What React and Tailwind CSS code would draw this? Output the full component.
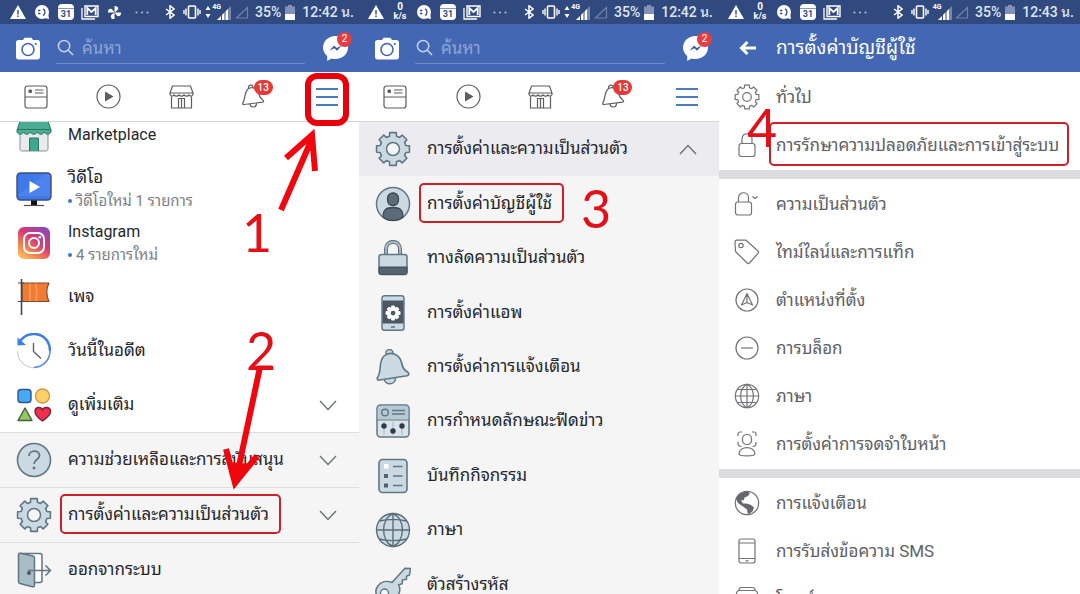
import React from "react";

/* ---------- status bar ---------- */

const Slot = ({ w = "w-6", children }) => (
  <span className={`flex shrink-0 items-center justify-center ${w}`}>{children}</span>
);

const WarnIcon = () => (
  <svg width="16" height="14" viewBox="0 0 16 14" aria-hidden="true">
    <path d="M8 0L16 14H0Z" fill="#fff" />
    <path d="M8 5v4.500M8 10.500v1.600" stroke="#324a80" strokeWidth="1.400" />
  </svg>
);
const ChatIcon = () => (
  <svg width="16" height="16" viewBox="0 0 16 16" aria-hidden="true">
    <circle cx="8" cy="8" r="7" fill="#fff" />
    <path d="M10 14l5 1-1-6z" fill="#fff" />
    <path d="M4 6.500h2.400M4 9.500h2.400M9 4.800c2.600 1.300 2.600 5.400 0 6.700" stroke="#324a80" strokeWidth="1.300" fill="none" />
  </svg>
);
const CalendarIcon = () => (
  <span className="relative flex h-4 w-4 items-end justify-center rounded-sm bg-white">
    <span className="absolute inset-x-0 top-1 h-px bg-[#8a97b8]" />
    <span className="text-[9px] font-bold leading-[11px] text-[#324a80]">31</span>
  </span>
);
const MailIcon = () => (
  <svg width="18" height="15" viewBox="0 0 18 15" fill="none" stroke="#fff" aria-hidden="true">
    <path d="M1 3v11h13" strokeWidth="1.300" />
    <path d="M4 1h13v10.500H4z" strokeWidth="1.400" />
    <path d="M6.300 10V3l4.200 4 4.200-4v7" strokeWidth="1.800" />
  </svg>
);
const PinwheelIcon = () => (
  <svg width="15" height="15" viewBox="0 0 16 16" fill="#fff" aria-hidden="true">
    {[0, 90, 180, 270].map((a) => (
      <path key={a} d="M8 8V1c3 0 4 1.200 4 2.800C12 5.500 10.500 6 8 8z" transform={`rotate(${a} 8 8)`} />
    ))}
  </svg>
);
const SpeedIcon = () => (
  <span className="flex flex-col items-center text-white">
    <span className="text-[10px] font-bold leading-[8px]">0</span>
    <span className="text-[9px] font-bold leading-[10px]">k/s</span>
  </span>
);
const DotsIcon = () => (
  <svg width="14" height="3" viewBox="0 0 14 3" fill="#aeb8d0" aria-hidden="true">
    <circle cx="1.500" cy="1.500" r="1.100" /><circle cx="7" cy="1.500" r="1.100" /><circle cx="12.500" cy="1.500" r="1.100" />
  </svg>
);
const BluetoothIcon = () => (
  <svg width="10" height="14" viewBox="0 0 10 14" fill="none" stroke="#fff" strokeWidth="1.500" aria-hidden="true">
    <path d="M1 4l8 6-4 3.300V.7L9 4l-8 6" />
  </svg>
);
const VibrateIcon = () => (
  <svg width="18" height="14" viewBox="0 0 18 14" fill="none" stroke="#fff" aria-hidden="true">
    <rect x="5.500" y="1" width="7" height="12" rx="1" strokeWidth="1.600" />
    <path d="M3 3.500v7M1 5v4M15 3.500v7M17 5v4" strokeWidth="1.400" />
  </svg>
);
const SignalIcon = ({ arrows }) => (
  <span className="flex items-center gap-px">
    {arrows && (
      <svg width="6" height="12" viewBox="0 0 6 12" fill="#fff" aria-hidden="true">
        <path d="M3 0l2.500 4h-5zM3 12L.5 8h5z" />
      </svg>
    )}
    <span className="relative h-4 w-[19px]">
      <svg className="absolute bottom-0 right-0" width="14" height="14" viewBox="0 0 14 14" aria-hidden="true">
        <path d="M14 0v14H0z" fill="#fff" opacity=".35" />
        <path d="M11 3v11H0z" fill="#fff" />
        <path d="M4.500 6v8M8 4v10" stroke="#324a80" strokeWidth="1" />
      </svg>
      <span className="absolute left-0 top-0 text-[7px] font-bold leading-[7px] text-white">4G</span>
    </span>
  </span>
);
const EmptySignalIcon = () => (
  <svg width="14" height="13" viewBox="0 0 14 13" aria-hidden="true">
    <path d="M12.500 1.500V12H1.500z" fill="none" stroke="#7182ab" strokeWidth="1.200" />
  </svg>
);
const BatteryIcon = () => (
  <svg width="10" height="15" viewBox="0 0 10 15" aria-hidden="true">
    <path d="M3 0h4v1.500h3V15H0V1.500h3z" fill="#8291b5" />
    <path d="M0 9h10v6H0z" fill="#fff" />
  </svg>
);

function StatusBar({ time, pinwheel, speed, arrows = true, pad }) {
  return (
    <div className={`flex h-6 shrink-0 items-center justify-between bg-[#30497f] ${pad}`}>
      <div className="flex items-center">
        <Slot><WarnIcon /></Slot>
        {speed && <Slot><SpeedIcon /></Slot>}
        <Slot><ChatIcon /></Slot>
        <Slot><CalendarIcon /></Slot>
        <Slot><MailIcon /></Slot>
        {pinwheel && <Slot><PinwheelIcon /></Slot>}
        <Slot w="w-8"><DotsIcon /></Slot>
      </div>
      <div className="flex items-center">
        <Slot w="w-5"><BluetoothIcon /></Slot>
        <Slot><VibrateIcon /></Slot>
        <Slot w={arrows ? "w-7" : "w-5"}><SignalIcon arrows={arrows} /></Slot>
        <Slot w="w-5"><EmptySignalIcon /></Slot>
        <span className="w-8 whitespace-nowrap text-center text-[14px] font-medium leading-6 text-[#dfe5f1]">35%</span>
        <Slot w="w-3"><BatteryIcon /></Slot>
        <span className="whitespace-nowrap pl-1.5 text-[14px] font-medium leading-6 text-[#dfe5f1]">{time}</span>
      </div>
    </div>
  );
}

/* ---------- app header and tabs ---------- */

function SearchHeader() {
  return (
    <header className="flex h-12 shrink-0 items-center bg-[#4367b2] pl-4 pr-[11px]">
      <button type="button" aria-label="Camera" className="shrink-0">
        <svg width="24" height="23" viewBox="0 0 24 23">
          <path d="M7 3l1.500-2.200h7L17 3h4.500C23 3 24 4 24 5.500V20c0 1.500-1 2.500-2.500 2.500h-19C1 22.500 0 21.500 0 20V5.500C0 4 1 3 2.500 3z" fill="#fff" />
          <circle cx="12" cy="12.500" r="6" fill="none" stroke="#4367b2" strokeWidth="1.600" />
          <circle cx="19.800" cy="7" r="1.100" fill="#4367b2" />
        </svg>
      </button>
      <div className="ml-4 mr-[18px] flex h-8 min-w-0 flex-1 items-center gap-2 border-b border-[#6f8bc6]">
        <svg className="ml-px shrink-0" width="17" height="17" viewBox="0 0 18 18" fill="none" stroke="#c9d4ec" strokeWidth="1.600" aria-hidden="true">
          <circle cx="7.500" cy="7.500" r="6" /><path d="M12 12l5 5" />
        </svg>
        <input type="search" aria-label="ค้นหา" placeholder="ค้นหา" className="w-full min-w-0 bg-transparent text-[17px] leading-6 text-white outline-none placeholder:text-[#8fa6d6]" />
      </div>
      <button type="button" aria-label="Messenger" className="relative shrink-0">
        <svg width="25" height="25" viewBox="0 0 25 25">
          <path d="M12.500 0C5.500 0 0 5 0 11.500c0 3.500 1.700 6.500 4.200 8.600V25l4.200-2.600c1.300.4 2.700.6 4.100.6 7 0 12.500-5 12.500-11.500S19.500 0 12.500 0z" fill="#fff" />
          <path d="M6.500 14.800l4.600-5.200 2.600 2.400 5-2.400-4.600 5.200-2.800-2.500z" fill="#38589c" />
        </svg>
        <span className="absolute -right-1 -top-1 flex h-[15px] w-[15px] items-center justify-center rounded-full bg-[#e53d3f] text-[10px] leading-none text-white">2</span>
      </button>
    </header>
  );
}

const FeedTab = () => (
  <svg width="24" height="24" viewBox="0 0 24 24" fill="none" stroke="#5d5d61" strokeWidth="1.200">
    <rect x="1" y="1" width="22" height="22" rx="2.500" />
    <path d="M1 12h22M11 5h8.500M11 8h8.500" />
    <rect x="4.500" y="4.500" width="3.500" height="3.500" rx="1" fill="#5d5d61" stroke="none" />
  </svg>
);
const PlayTab = () => (
  <svg width="25" height="25" viewBox="0 0 25 25" fill="none" stroke="#5d5d61" strokeWidth="1.200">
    <circle cx="12.500" cy="12.500" r="11.500" />
    <path d="M9 7.500l8.500 5L9 17.500z" fill="#5d5d61" stroke="none" />
  </svg>
);
const ShopTab = () => (
  <svg width="25" height="24" viewBox="0 0 25 24" fill="none" stroke="#5d5d61" strokeWidth="1.200">
    <path d="M3.500 1h18L24 8v1.500c-1 2-3 2-4 .5-1.300 1.600-3.500 1.600-5 0-1.300 1.600-3.700 1.600-5 0-1.500 1.600-3.700 1.600-5 0C4 11.500 2 11.500 1 9.500V8zM1 8h23" />
    <path d="M2.500 11.500V23h20V11.500M9.500 23v-9.500h6V23M12.500 13.500V23" />
  </svg>
);
const BellTab = () => (
  <svg width="24" height="25" viewBox="0 0 24 25" fill="none" stroke="#5d5d61" strokeWidth="1.200">
    <path d="M2 20.500c-1.200.2-1.500-.7-1-1.600C3.500 14.500 2 9 6 5c4.500-3.500 10 0 11 5.500.8 3.500 1.500 4.200 4 5.700 1 .8.700 1.800-.4 2z" />
    <path d="M6.500 4.500C6 2 8 .8 9.500 1.200 11 1.500 11 2.500 11 3.200M8 20c.3 4 6.500 4.300 6.500-.8" />
  </svg>
);
const MenuTab = () => (
  <svg width="22" height="20" viewBox="0 0 22 20" stroke="#4b7bbd" strokeWidth="2">
    <path d="M0 2h22M0 10h22M0 18h22" />
  </svg>
);

function Tabs({ marked }) {
  const tab = "relative flex items-center justify-center";
  return (
    <nav className="-mr-1 grid h-[50px] shrink-0 grid-cols-5 border-b border-[#d5d6da] bg-white">
      <button type="button" aria-label="News feed" className={tab}><FeedTab /></button>
      <button type="button" aria-label="Videos" className={tab}><PlayTab /></button>
      <button type="button" aria-label="Marketplace" className={tab}><ShopTab /></button>
      <button type="button" aria-label="Notifications" className={tab}>
        <BellTab />
        <span className="absolute left-9 top-2 flex h-[15px] w-[19px] items-center justify-center rounded-full bg-[#e53935] text-[10px] font-medium leading-none text-white">13</span>
      </button>
      <button type="button" aria-label="Menu" className={tab}>
        <MenuTab />
        {marked && <span className="absolute left-1/2 top-px z-10 h-[53px] w-11 -translate-x-1/2 rounded-xl border-[6px] border-[#e8000b]" />}
      </button>
    </nav>
  );
}

/* ---------- menu icons ---------- */

const line = "#607683";
const fill = "#cbdae2";

const gearPath = (() => {
  const pts = [];
  const n = 8;
  const c = 18;
  for (let i = 0; i < n; i++) {
    const a = (i * 2 * Math.PI) / n - Math.PI / 2;
    [[-0.27, 13.3], [-0.2, 16.7], [0.2, 16.7], [0.27, 13.3]].forEach(([d, r]) =>
      pts.push(`${(c + r * Math.cos(a + d)).toFixed(1)} ${(c + r * Math.sin(a + d)).toFixed(1)}`)
    );
  }
  return `M${pts.join("L")}Z`;
})();

const Box = ({ children, size = 36 }) => (
  <svg width={size} height={size} viewBox="0 0 36 36" fill="none" strokeLinejoin="round" aria-hidden="true">{children}</svg>
);
const GearIcon = () => (
  <Box>
    <path d={gearPath} fill={fill} stroke={line} strokeWidth="1.600" />
    <circle cx="18" cy="18" r="6.500" fill="#f5f6f7" stroke={line} strokeWidth="1.500" />
  </Box>
);
const MarketIcon = () => (
  <Box>
    <path d="M4 15v17c0 1 .5 2 2 2h24c1.500 0 2-1 2-2V15z" fill="#e9eaec" stroke="#8b8f96" />
    <path d="M13.500 34V21h9v13" fill="#3fa88c" stroke="#2d7566" />
    <path d="M4 4h28l3 9v2c-1.500 3-5 3-6.500 0-2 3-5.500 3-7 0-2 3-5.500 3-7 0-2 3-5.500 3-7 0C6 18 2.500 18 1 15v-2z" fill="#49ad93" stroke="#2f7163" />
    <path d="M1.500 12.500h33" stroke="#2f7163" />
  </Box>
);
const VideoIcon = () => (
  <Box>
    <path d="M15 29h6v5h-6z" fill="#111" /><path d="M8 34.500h20" stroke="#554e4e" strokeWidth="1.200" />
    <rect x="1" y="2" width="34" height="27" rx="3.500" fill="#3f78e8" stroke="#3a4d7c" strokeWidth="1.400" />
    <path d="M2 24L29 3h3c1.500 0 2 1 2 2v20H2z" fill="#6398fb" opacity=".35" />
    <path d="M13.500 10l10.500 6-10.500 6z" fill="#fff" />
  </Box>
);
const InstagramIcon = () => (
  <Box>
    <defs>
      <linearGradient id="insta" x1="0.100" y1="1" x2="0.800" y2="0">
        <stop offset="0" stopColor="#fdc468" /><stop offset=".3" stopColor="#f2824f" />
        <stop offset=".6" stopColor="#d73a73" /><stop offset="1" stopColor="#8a49b5" />
      </linearGradient>
    </defs>
    <rect x="2" y="2" width="32" height="32" rx="6" fill="url(#insta)" />
    <rect x="8" y="8" width="20" height="20" rx="6" stroke="#fff" strokeWidth="2" />
    <circle cx="18" cy="18" r="5" stroke="#fff" strokeWidth="2" />
    <circle cx="23.800" cy="12.200" r="1.300" fill="#fff" />
  </Box>
);
const FlagIcon = () => (
  <Box>
    <path d="M6 4h27c-3 6-3 12 0 18.500H6z" fill="#f07b32" stroke="#7d4a32" strokeWidth="1.200" />
    <path d="M14 4.500v17.500M20 4.500c1 6 1 12 0 17.500" stroke="#f9a35e" strokeWidth="2" opacity=".7" />
    <path d="M5.500 0v36" stroke="#4b4748" strokeWidth="1.600" /><path d="M2 4h6M2 22.500h6" stroke="#4b4748" />
  </Box>
);
const ClockIcon = () => (
  <Box>
    <path d="M34 18a16.500 16.500 0 0 1-16.500 16.500" stroke="#5a91db" strokeWidth="1.600" />
    <path d="M17.500 34.500C8 34.500 1.500 27 1.500 18" stroke="#c9d1dc" strokeWidth="1.200" />
    <path d="M3.500 9.500C9-1 24-2 31 7.500c2 3 3 6.500 3 10.500" stroke="#3d7de0" strokeWidth="2.400" />
    <path d="M1.500 4.500v8l8.500-.5z" fill="#3d7de0" />
    <path d="M17.500 10v8.500l7.500 7" stroke="#5b6068" strokeWidth="1.400" />
  </Box>
);
const ShapesIcon = () => (
  <Box>
    <rect x="2" y="2.500" width="13" height="13" rx="3" fill="#49a8f5" stroke="#27598c" strokeWidth="1.400" />
    <circle cx="26.500" cy="9" r="7" fill="#ffd067" stroke="#c89a49" strokeWidth="1.400" />
    <path d="M9 21L16 33.500H2z" fill="#93c765" stroke="#3c6333" strokeWidth="1.400" />
    <path d="M26.500 34C20 29.500 19 27 19 24.500c0-4.500 6-5.500 7.500-1.500 1.500-4 8-3 8 1.500 0 2.500-1.500 5-8 9.500z" fill="#f0304f" stroke="#7b1f36" strokeWidth="1.400" />
  </Box>
);
const HelpIcon = () => (
  <Box>
    <circle cx="18" cy="18" r="16.500" fill={fill} stroke={line} strokeWidth="1.600" />
    <path d="M13 14c0-6.500 10.500-6.500 10.500-.5 0 4-5.500 4-5.500 8.500" stroke={line} strokeWidth="1.800" />
    <circle cx="18" cy="26" r="1.500" fill={line} />
  </Box>
);
const DoorIcon = () => (
  <Box>
    <path d="M4 1.500h20c1.200 0 2 .8 2 2v25c0 1.200-.8 2-2 2h-6" fill="#fff" stroke={line} strokeWidth="1.500" />
    <path d="M2.500 3c0-1.500 1-2 2.200-1.700L17 4c1 .2 1.500 1 1.500 2v27c0 1.500-1 2-2.200 1.700L4 31.500c-1-.3-1.500-1-1.500-2z" fill="#a9bdc7" stroke={line} strokeWidth="1.500" />
    <circle cx="13" cy="21" r="2" fill="#475a66" />
    <path d="M12 18.500h22.500M29.500 13.500l5 5-5 5" stroke={line} strokeWidth="1.500" />
  </Box>
);
const UserIcon = () => (
  <Box>
    <circle cx="18" cy="18" r="16.500" fill={fill} stroke={line} strokeWidth="1.500" />
    <path d="M8 31c0-8 4-9.500 10-9.500S28 23 28 31c-5 4.500-15 4.500-20 0z" fill="#5d6b78" stroke="#3a4854" strokeWidth="1.300" />
    <rect x="12.500" y="7" width="11" height="12.500" rx="5.200" fill="#5d6b78" stroke="#3a4854" strokeWidth="1.300" />
  </Box>
);
const LockIcon = () => (
  <Box>
    <path d="M11 15V9c0-9.500 14-9.500 14 0v6" stroke={line} strokeWidth="4" />
    <path d="M11 15V9c0-9.500 14-9.500 14 0v6" stroke="#b9c9d3" strokeWidth="1.500" />
    <rect x="4" y="14.500" width="28" height="20" rx="2.500" fill={fill} stroke={line} strokeWidth="1.500" />
    <path d="M4 27h28v5c0 1.500-1 2.500-2.500 2.500h-23C5 34.500 4 33.500 4 32z" fill="#53636f" stroke="#3f4e59" />
  </Box>
);
const PhoneGearIcon = () => (
  <Box>
    <rect x="7" y=".7" width="22" height="34.600" rx="2.500" fill={fill} stroke={line} strokeWidth="1.400" />
    <path d="M7.500 5.500h21v23h-21z" fill="#4c5763" /><path d="M16 32h4" stroke={line} strokeWidth="1.500" />
    <g transform="translate(10.300 10.300) scale(.43)"><path d={gearPath} fill="#fff" stroke="#fff" strokeWidth="2" /><circle cx="18" cy="18" r="5.500" fill="#4c5763" /></g>
  </Box>
);
const BellIcon = () => (
  <Box>
    <circle cx="14.500" cy="4" r="3.500" fill={fill} stroke={line} strokeWidth="1.400" />
    <path d="M9 29c.5 8 11.500 7.500 11.500 0" fill={fill} stroke={line} strokeWidth="1.500" />
    <path d="M4.500 31C2 31.500 1.500 29.500 3 27.500 7 21 3 13 9 7c6.500-5.500 16-1.500 17.500 6.500 1 5 2 7.500 6 9.500 2 1.200 1.500 3.200-.3 3.700z" fill={fill} stroke={line} strokeWidth="1.600" />
  </Box>
);
const FeedPrefIcon = () => (
  <Box>
    <rect x="2" y="2" width="32" height="32" rx="3.500" fill="#d8e4e9" stroke={line} strokeWidth="1.500" />
    <path d="M2.700 16.500V5.500c0-1.800 1-2.800 2.800-2.800h25c1.800 0 2.800 1 2.800 2.800v11z" fill="#b6cad3" />
    <path d="M2 17h32" stroke={line} /><circle cx="10" cy="9.500" r="3.300" stroke={line} strokeWidth="1.400" />
    <path d="M17 7.500h13M17 11h13" stroke={line} strokeWidth="1.300" />
    <path d="M9 19v13M18 19v13M27 19v13" stroke="#a2b6c0" />
    <circle cx="9" cy="23" r="2.700" fill="#2f3b46" /><circle cx="18" cy="28" r="2.700" fill="#2f3b46" /><circle cx="27" cy="23" r="2.700" fill="#2f3b46" />
  </Box>
);
const LogIcon = () => (
  <Box>
    <rect x="4" y="1.500" width="28" height="33" rx="3.500" fill={fill} stroke={line} strokeWidth="1.600" />
    <rect x="9" y="6" width="4.500" height="4.500" fill="#fff" /><rect x="9" y="16" width="4" height="4" fill="#4f6471" /><rect x="9" y="25.500" width="4" height="4" fill="#4f6471" />
    <path d="M18 8.500h9.500M18 18h9.500M18 27.500h9.500" stroke={line} strokeWidth="1.400" />
  </Box>
);
const GlobeIcon = () => (
  <Box>
    <circle cx="18" cy="18" r="16.500" fill={fill} />
    <g stroke="#596e7b" strokeWidth="1.400"><circle cx="18" cy="18" r="16.500" /><path d="M18 1.500v33M1.500 18h33M4.500 9c7.500-2.200 19.500-2.200 27 0M4.500 27c7.500 2.200 19.500 2.200 27 0" /><path d="M18 1.500C5.500 7 5.500 29 18 34.500 30.500 29 30.500 7 18 1.500z" /></g>
  </Box>
);
const KeyIcon = () => (
  <Box>
    <path d="M17 15.500L30 1.200l5.500.3-1 6.500-3 1.200v3l-4 .8-.3 3.700-3.700 1c3.500 6-1 16.500-10.500 16.500S-2 26.500 2.500 19.500c3.300-4.800 9-6.300 14.500-4z" fill={fill} stroke={line} strokeWidth="1.500" />
    <circle cx="9.500" cy="26" r="4" fill="#f5f6f7" stroke={line} strokeWidth="1.400" />
  </Box>
);
const Chevron = ({ up }) => (
  <svg className="shrink-0" width="18" height="11" viewBox="0 0 18 11" fill="none" stroke="#6f7277" strokeWidth="1.400" aria-hidden="true">
    <path d={up ? "M1 10l8-8.500L17 10" : "M1 1l8 8.500L17 1"} />
  </svg>
);

/* ---------- shared pieces ---------- */

const Mark = ({ className }) => (
  <span aria-hidden="true" className={`pointer-events-none absolute rounded-[5px] border-2 border-[#cc1f26] ${className}`} />
);
const Step = ({ n, className }) => (
  <span className={`pointer-events-none absolute z-20 font-['Lato',sans-serif] text-[52px] font-normal leading-[52px] text-[#e3101a] ${className}`}>{n}</span>
);

function MenuRow({ icon, label, latin, note, chevron, marked, className = "h-[54px]" }) {
  return (
    <a href="#" className={`flex items-center gap-4 pl-4 pr-[22px] ${className}`}>
      <span className="shrink-0">{icon}</span>
      <span className="min-w-0 flex-1">
        <span className={`relative inline-block whitespace-nowrap leading-[22px] text-[#26282c] ${latin ? "text-[16px]" : "text-[17px]"}`}>
          {label}
          {marked && <Mark className="-inset-y-[9px] -left-[8px] -right-[12px]" />}
        </span>
        {note && (
          <span className="flex items-center gap-1 whitespace-nowrap text-[15px] leading-[22px] text-[#7d8086]">
            <span className="h-1 w-1 rounded-full bg-[#3f78c8]" />{note}
          </span>
        )}
      </span>
      {chevron && <Chevron up={chevron === "up"} />}
    </a>
  );
}

/* ---------- settings icons ---------- */

const Thin = ({ children }) => (
  <svg width="26" height="26" viewBox="0 0 26 26" fill="none" stroke="#737378" strokeWidth="1.200" strokeLinejoin="round" aria-hidden="true">{children}</svg>
);
const ThinGear = () => (
  <Thin><path d={gearPath} transform="scale(.722)" strokeWidth="1.700" /><circle cx="13" cy="13" r="4.300" /></Thin>
);
const ThinLock = () => <Thin><rect x="5" y="11.500" width="16" height="13" rx="2.500" /><path d="M8 11.500V7c0-7 10-7 10 0v4.500" /></Thin>;
const ThinPrivacy = () => <Thin><rect x="1.500" y="11" width="16" height="13" rx="2.500" /><path d="M4.500 11V7c0-7 10-7 10 0v4M18.500 5.500l2.500 2 2.500-2" /></Thin>;
const ThinTag = () => <Thin><path d="M1 3c0-1 .7-1.800 1.800-1.800H12L24 12c.8.8.8 1.600 0 2.400L15.500 24c-.8.800-1.600.8-2.400 0L1.500 12.500z" /><circle cx="7" cy="6.500" r="2.200" /></Thin>;
const ThinPlace = () => <Thin><circle cx="13" cy="13" r="11" /><path d="M13 6.500l5.500 11.500-5.500-2.500L7.500 18zM13 6.500v9" /></Thin>;
const ThinBlock = () => <Thin><circle cx="13" cy="13" r="11" /><path d="M7 13h12" /></Thin>;
const ThinGlobe = () => <Thin><circle cx="13" cy="13" r="11.700" /><path d="M13 1.300v23.400M1.300 13h23.400M3.300 6.500h19.400M3.300 19.500h19.400" /><path d="M13 1.300C4.500 6 4.500 20 13 24.700 21.500 20 21.500 6 13 1.300z" /></Thin>;
const ThinFace = () => <Thin><path d="M4 5V3c0-1.200.8-2 2-2h2M18 1h2c1.200 0 2 .8 2 2v2M4 11v1c0 2 1.500 3.500 3.500 3.500M22 11v1c0 2-1.500 3.500-3.500 3.500" /><rect x="8.500" y="3.500" width="9" height="10" rx="4.300" /><path d="M5 23c0-8.500 16-8.500 16 0-1 2.500-15 2.500-16 0z" /></Thin>;
const ThinEarth = () => (
  <Thin>
    <circle cx="13" cy="13" r="11.700" />
    <path d="M2 9C4 4.500 8 1.800 13 1.500l3 1.500-2 3-3.500 1.500L10 10l-3 .5 2 3c4-.5 8 .5 11 4l-1.500 4-4.500 3-1-5-4-3L4 13z" fill="#66666f" stroke="none" />
  </Thin>
);
const ThinPhone = () => <Thin><rect x="5" y="1" width="16" height="24" rx="2" /><path d="M5 5h16M5 20.500h16M11.500 22.800h3" /></Thin>;
const ThinPost = () => <Thin><path d="M5 4c0-1.500.7-2.500 2.500-2.500h11C20.300 1.500 21 2.500 21 4M2.500 8c0-2 1-3.500 3-3.500h15c2 0 3 1.500 3 3.500v16h-21z" /><path d="M3 9h20" stroke="#9aa6ae" strokeWidth="2" /></Thin>;

function SettingRow({ icon, label, marked }) {
  return (
    <a href="#" className="flex h-12 items-center gap-4 pl-[15px] pr-4">
      <span className="shrink-0">{icon}</span>
      <span className="relative whitespace-nowrap text-[17px] leading-[22px] text-[#606166]">
        {label}
        {marked && <Mark className="-bottom-[10px] -left-[7px] -right-[10px] -top-[12px]" />}
      </span>
    </a>
  );
}

/* ---------- screens ---------- */

function MenuScreen() {
  return (
    <section className="relative flex min-w-0 flex-col overflow-hidden bg-white">
      <StatusBar time="12:42 น." pinwheel pad="pl-[6px] pr-[5px]" />
      <SearchHeader />
      <Tabs marked />
      <div className="flex-1 overflow-hidden">
        <div className="-mt-[14px]">
          <MenuRow icon={<MarketIcon />} label="Marketplace" latin />
          <MenuRow icon={<VideoIcon />} label="วิดีโอ" note="วิดีโอใหม่ 1 รายการ" />
          <MenuRow icon={<InstagramIcon />} label="Instagram" latin note="4 รายการใหม่" />
          <MenuRow icon={<FlagIcon />} label="เพจ" />
          <MenuRow icon={<ClockIcon />} label="วันนี้ในอดีต" />
          <MenuRow icon={<ShapesIcon />} label="ดูเพิ่มเติม" chevron="down" />
        </div>
        <div className="divide-y divide-[#dddfe2] border-t border-[#dddfe2] bg-[#f5f5f6]">
          <MenuRow icon={<HelpIcon />} label="ความช่วยเหลือและการสนับสนุน" chevron="down" className="h-[55px]" />
          <MenuRow icon={<GearIcon />} label="การตั้งค่าและความเป็นส่วนตัว" chevron="down" marked className="h-[55px]" />
          <MenuRow icon={<DoorIcon />} label="ออกจากระบบ" />
        </div>
      </div>
      <svg className="pointer-events-none absolute left-0 top-0 z-10" width="359" height="594" viewBox="0 0 359 594" fill="none" stroke="#f0060c" strokeWidth="6" aria-hidden="true">
        <path d="M281 210L311 141M286 158L312 135L315 171" />
        <path d="M260 367L236 480M226 449L235 483L257 456" />
        <path d="M229 462L235 488L250 464z" fill="#f0060c" stroke="none" />
      </svg>
      <Step n="1" className="left-[242px] top-[206px]" />
      <Step n="2" className="left-[246px] top-[324px]" />
    </section>
  );
}

function PrivacyScreen() {
  const rows = [
    [<UserIcon />, "การตั้งค่าบัญชีผู้ใช้", true],
    [<LockIcon />, "ทางลัดความเป็นส่วนตัว"],
    [<PhoneGearIcon />, "การตั้งค่าแอพ"],
    [<BellIcon />, "การตั้งค่าการแจ้งเตือน"],
    [<FeedPrefIcon />, "การกำหนดลักษณะฟีดข่าว"],
    [<LogIcon />, "บันทึกกิจกรรม"],
    [<GlobeIcon />, "ภาษา"],
    [<KeyIcon />, "ตัวสร้างรหัส"],
  ];
  return (
    <section className="relative flex min-w-0 flex-col overflow-hidden bg-[#f5f5f6]">
      <StatusBar time="12:42 น." speed pad="pl-[5px] pr-[6px]" />
      <SearchHeader />
      <Tabs />
      <div className="grid h-[490px] shrink-0 auto-rows-fr">
        <MenuRow icon={<GearIcon />} label="การตั้งค่าและความเป็นส่วนตัว" chevron="up" className="bg-[#ebebf0]" />
        {rows.map(([icon, label, marked]) => (
          <MenuRow key={label} icon={icon} label={label} marked={marked} className="" />
        ))}
      </div>
      <Step n="3" className="left-[222px] top-[182px]" />
    </section>
  );
}

function AccountScreen() {
  const group = "py-px";
  return (
    <section className="relative flex min-w-0 flex-col overflow-hidden bg-white">
      <StatusBar time="12:43 น." speed arrows={false} pad="pl-[5px] pr-[6px]" />
      <header className="flex h-12 shrink-0 items-center gap-5 bg-[#4367b2] pl-5">
        <button type="button" aria-label="Back">
          <svg width="17" height="14" viewBox="0 0 17 14" fill="none" stroke="#fff" strokeWidth="3"><path d="M17 7H3M8.500 1L2.500 7l6 6" /></svg>
        </button>
        <h1 className="whitespace-nowrap text-[19px] leading-6 text-white">การตั้งค่าบัญชีผู้ใช้</h1>
      </header>
      <div className={group}>
        <SettingRow icon={<ThinGear />} label="ทั่วไป" />
        <SettingRow icon={<ThinLock />} label="การรักษาความปลอดภัยและการเข้าสู่ระบบ" marked />
      </div>
      <div className="h-[9px] shrink-0 bg-[#dcdce0]" />
      <div className={group}>
        <SettingRow icon={<ThinPrivacy />} label="ความเป็นส่วนตัว" />
        <SettingRow icon={<ThinTag />} label="ไทม์ไลน์และการแท็ก" />
        <SettingRow icon={<ThinPlace />} label="ตำแหน่งที่ตั้ง" />
        <SettingRow icon={<ThinBlock />} label="การบล็อก" />
        <SettingRow icon={<ThinGlobe />} label="ภาษา" />
        <SettingRow icon={<ThinFace />} label="การตั้งค่าการจดจำใบหน้า" />
      </div>
      <div className="h-[9px] shrink-0 bg-[#dcdce0]" />
      <div className={group}>
        <SettingRow icon={<ThinEarth />} label="การแจ้งเตือน" />
        <SettingRow icon={<ThinPhone />} label="การรับส่งข้อความ SMS" />
        <SettingRow icon={<ThinPost />} label="โพสต์" />
      </div>
      <Step n="4" className="left-[28px] top-[101px]" />
    </section>
  );
}

export default function App() {
  return (
    <main className="grid h-screen grid-cols-[359fr_360fr_361fr] overflow-hidden font-[Roboto,'Noto_Sans_Thai_Looped',Loma,'Noto_Sans_Thai',sans-serif]">
      <MenuScreen />
      <PrivacyScreen />
      <AccountScreen />
    </main>
  );
}
